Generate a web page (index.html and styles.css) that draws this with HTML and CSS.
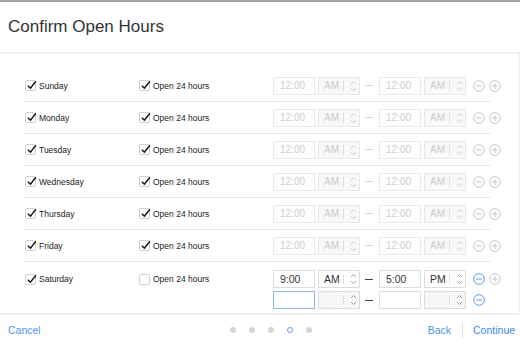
FILE: index.html
```html
<!DOCTYPE html>
<html>
<head>
<title>Confirm Open Hours</title>
<link rel="stylesheet" href="styles.css">
</head>
<body>
<div class="topline"></div>
<header class="header">
<h1>Confirm Open Hours</h1>
</header>

<main class="panel">
<div class="row">
<label class="day"><span class="box"><svg viewBox="0 0 12 12"><path d="M2 6.2 L4.8 9 L10.8 1.4"/></svg></span>Sunday</label>
<label class="allday"><span class="box"><svg viewBox="0 0 12 12"><path d="M2 6.2 L4.8 9 L10.8 1.4"/></svg></span>Open 24 hours</label>
<div class="range off">
<span class="time">12:00</span>
<span class="ampm"><span class="val">AM</span><span class="sep"></span><svg class="chev" viewBox="0 0 7 12"><path d="M1 4 L3.5 1.5 L6 4 M1 8 L3.5 10.5 L6 8"/></svg></span>
<span class="dash"></span>
<span class="time">12:00</span>
<span class="ampm"><span class="val">AM</span><span class="sep"></span><svg class="chev" viewBox="0 0 7 12"><path d="M1 4 L3.5 1.5 L6 4 M1 8 L3.5 10.5 L6 8"/></svg></span>
<svg class="act" viewBox="0 0 12 12"><circle cx="6" cy="6" r="5.3"/><path d="M3 6 H9"/></svg>
<svg class="act" viewBox="0 0 12 12"><circle cx="6" cy="6" r="5.3"/><path d="M3 6 H9 M6 3 V9"/></svg>
</div>
</div>

<div class="row">
<label class="day"><span class="box"><svg viewBox="0 0 12 12"><path d="M2 6.2 L4.8 9 L10.8 1.4"/></svg></span>Monday</label>
<label class="allday"><span class="box"><svg viewBox="0 0 12 12"><path d="M2 6.2 L4.8 9 L10.8 1.4"/></svg></span>Open 24 hours</label>
<div class="range off">
<span class="time">12:00</span>
<span class="ampm"><span class="val">AM</span><span class="sep"></span><svg class="chev" viewBox="0 0 7 12"><path d="M1 4 L3.5 1.5 L6 4 M1 8 L3.5 10.5 L6 8"/></svg></span>
<span class="dash"></span>
<span class="time">12:00</span>
<span class="ampm"><span class="val">AM</span><span class="sep"></span><svg class="chev" viewBox="0 0 7 12"><path d="M1 4 L3.5 1.5 L6 4 M1 8 L3.5 10.5 L6 8"/></svg></span>
<svg class="act" viewBox="0 0 12 12"><circle cx="6" cy="6" r="5.3"/><path d="M3 6 H9"/></svg>
<svg class="act" viewBox="0 0 12 12"><circle cx="6" cy="6" r="5.3"/><path d="M3 6 H9 M6 3 V9"/></svg>
</div>
</div>

<div class="row">
<label class="day"><span class="box"><svg viewBox="0 0 12 12"><path d="M2 6.2 L4.8 9 L10.8 1.4"/></svg></span>Tuesday</label>
<label class="allday"><span class="box"><svg viewBox="0 0 12 12"><path d="M2 6.2 L4.8 9 L10.8 1.4"/></svg></span>Open 24 hours</label>
<div class="range off">
<span class="time">12:00</span>
<span class="ampm"><span class="val">AM</span><span class="sep"></span><svg class="chev" viewBox="0 0 7 12"><path d="M1 4 L3.5 1.5 L6 4 M1 8 L3.5 10.5 L6 8"/></svg></span>
<span class="dash"></span>
<span class="time">12:00</span>
<span class="ampm"><span class="val">AM</span><span class="sep"></span><svg class="chev" viewBox="0 0 7 12"><path d="M1 4 L3.5 1.5 L6 4 M1 8 L3.5 10.5 L6 8"/></svg></span>
<svg class="act" viewBox="0 0 12 12"><circle cx="6" cy="6" r="5.3"/><path d="M3 6 H9"/></svg>
<svg class="act" viewBox="0 0 12 12"><circle cx="6" cy="6" r="5.3"/><path d="M3 6 H9 M6 3 V9"/></svg>
</div>
</div>

<div class="row">
<label class="day"><span class="box"><svg viewBox="0 0 12 12"><path d="M2 6.2 L4.8 9 L10.8 1.4"/></svg></span>Wednesday</label>
<label class="allday"><span class="box"><svg viewBox="0 0 12 12"><path d="M2 6.2 L4.8 9 L10.8 1.4"/></svg></span>Open 24 hours</label>
<div class="range off">
<span class="time">12:00</span>
<span class="ampm"><span class="val">AM</span><span class="sep"></span><svg class="chev" viewBox="0 0 7 12"><path d="M1 4 L3.5 1.5 L6 4 M1 8 L3.5 10.5 L6 8"/></svg></span>
<span class="dash"></span>
<span class="time">12:00</span>
<span class="ampm"><span class="val">AM</span><span class="sep"></span><svg class="chev" viewBox="0 0 7 12"><path d="M1 4 L3.5 1.5 L6 4 M1 8 L3.5 10.5 L6 8"/></svg></span>
<svg class="act" viewBox="0 0 12 12"><circle cx="6" cy="6" r="5.3"/><path d="M3 6 H9"/></svg>
<svg class="act" viewBox="0 0 12 12"><circle cx="6" cy="6" r="5.3"/><path d="M3 6 H9 M6 3 V9"/></svg>
</div>
</div>

<div class="row">
<label class="day"><span class="box"><svg viewBox="0 0 12 12"><path d="M2 6.2 L4.8 9 L10.8 1.4"/></svg></span>Thursday</label>
<label class="allday"><span class="box"><svg viewBox="0 0 12 12"><path d="M2 6.2 L4.8 9 L10.8 1.4"/></svg></span>Open 24 hours</label>
<div class="range off">
<span class="time">12:00</span>
<span class="ampm"><span class="val">AM</span><span class="sep"></span><svg class="chev" viewBox="0 0 7 12"><path d="M1 4 L3.5 1.5 L6 4 M1 8 L3.5 10.5 L6 8"/></svg></span>
<span class="dash"></span>
<span class="time">12:00</span>
<span class="ampm"><span class="val">AM</span><span class="sep"></span><svg class="chev" viewBox="0 0 7 12"><path d="M1 4 L3.5 1.5 L6 4 M1 8 L3.5 10.5 L6 8"/></svg></span>
<svg class="act" viewBox="0 0 12 12"><circle cx="6" cy="6" r="5.3"/><path d="M3 6 H9"/></svg>
<svg class="act" viewBox="0 0 12 12"><circle cx="6" cy="6" r="5.3"/><path d="M3 6 H9 M6 3 V9"/></svg>
</div>
</div>

<div class="row">
<label class="day"><span class="box"><svg viewBox="0 0 12 12"><path d="M2 6.2 L4.8 9 L10.8 1.4"/></svg></span>Friday</label>
<label class="allday"><span class="box"><svg viewBox="0 0 12 12"><path d="M2 6.2 L4.8 9 L10.8 1.4"/></svg></span>Open 24 hours</label>
<div class="range off">
<span class="time">12:00</span>
<span class="ampm"><span class="val">AM</span><span class="sep"></span><svg class="chev" viewBox="0 0 7 12"><path d="M1 4 L3.5 1.5 L6 4 M1 8 L3.5 10.5 L6 8"/></svg></span>
<span class="dash"></span>
<span class="time">12:00</span>
<span class="ampm"><span class="val">AM</span><span class="sep"></span><svg class="chev" viewBox="0 0 7 12"><path d="M1 4 L3.5 1.5 L6 4 M1 8 L3.5 10.5 L6 8"/></svg></span>
<svg class="act" viewBox="0 0 12 12"><circle cx="6" cy="6" r="5.3"/><path d="M3 6 H9"/></svg>
<svg class="act" viewBox="0 0 12 12"><circle cx="6" cy="6" r="5.3"/><path d="M3 6 H9 M6 3 V9"/></svg>
</div>
</div>

<div class="row last">
<label class="day"><span class="box"><svg viewBox="0 0 12 12"><path d="M2 6.2 L4.8 9 L10.8 1.4"/></svg></span>Saturday</label>
<label class="allday"><span class="box"></span>Open 24 hours</label>
<div class="ranges">
<div class="range">
<span class="time">9:00</span>
<span class="ampm"><span class="val">AM</span><span class="sep"></span><svg class="chev" viewBox="0 0 7 12"><path d="M1 4 L3.5 1.5 L6 4 M1 8 L3.5 10.5 L6 8"/></svg></span>
<span class="dash"></span>
<span class="time">5:00</span>
<span class="ampm"><span class="val">PM</span><span class="sep"></span><svg class="chev" viewBox="0 0 7 12"><path d="M1 4 L3.5 1.5 L6 4 M1 8 L3.5 10.5 L6 8"/></svg></span>
<svg class="act blue" viewBox="0 0 12 12"><circle cx="6" cy="6" r="5.3"/><path d="M3 6 H9"/></svg>
<svg class="act" viewBox="0 0 12 12"><circle cx="6" cy="6" r="5.3"/><path d="M3 6 H9 M6 3 V9"/></svg>
</div>
<div class="range">
<span class="time focus"></span>
<span class="ampm empty"><span class="val"></span><span class="sep"></span><svg class="chev" viewBox="0 0 7 12"><path d="M1 4 L3.5 1.5 L6 4 M1 8 L3.5 10.5 L6 8"/></svg></span>
<span class="dash"></span>
<span class="time"></span>
<span class="ampm empty"><span class="val"></span><span class="sep"></span><svg class="chev" viewBox="0 0 7 12"><path d="M1 4 L3.5 1.5 L6 4 M1 8 L3.5 10.5 L6 8"/></svg></span>
<svg class="act blue" viewBox="0 0 12 12"><circle cx="6" cy="6" r="5.3"/><path d="M3 6 H9"/></svg>
</div>
</div>
</div>
</main>

<footer class="footer">
<a class="link">Cancel</a>
<div class="dots">
<span class="dot"></span>
<span class="dot"></span>
<span class="dot"></span>
<span class="dot current"></span>
<span class="dot"></span>
</div>
<a class="link back">Back</a>
<span class="divider"></span>
<a class="link next">Continue</a>
</footer>
</body>
</html>
```

FILE: styles.css
```css
body {
margin: 0;
font-family: "Liberation Sans", Arial, sans-serif;
color: #333;
background: #fff;
}

.topline {
height: 2px;
background-color: #a3a3a3;
}

.header {
height: 50px;
display: flex;
align-items: center;
padding-left: 8px;
border-bottom: 2px solid #efefef;
}

.header h1 {
margin: 0;
font-size: 17px;
font-weight: normal;
color: #333;
}

.panel {
padding-top: 16px;
border-right: 1px solid #ececec;
}

.row {
margin-left: 24px;
width: 466px;
height: 31px;
padding-left: 1px;
box-sizing: content-box;
display: flex;
align-items: center;
border-bottom: 1px solid #e8e8e8;
}

.row > * {
flex-shrink: 0;
}

.row.last {
height: auto;
padding-top: 8px;
padding-bottom: 4px;
align-items: flex-start;
border-bottom: none;
}

.day,
.allday {
display: flex;
align-items: center;
height: 18px;
font-size: 8.5px;
color: #222;
}

.day {
width: 114px;
}

.allday {
width: 134px;
}

.box {
position: relative;
width: 9px;
height: 9px;
border: 1px solid #cfcfcf;
border-radius: 2px;
margin-right: 3px;
background: #fff;
}

.box svg {
position: absolute;
left: 0;
top: -1px;
width: 11px;
height: 11px;
fill: none;
stroke: #111;
stroke-width: 1.5;
}

.ranges {
display: flex;
flex-direction: column;
gap: 3px;
}

.range {
display: flex;
align-items: center;
gap: 3px;
}

.range > * {
flex-shrink: 0;
}

.time,
.ampm {
box-sizing: border-box;
width: 42px;
height: 18px;
border: 1px solid #dcdcdc;
font-size: 10.5px;
color: #333;
display: flex;
align-items: center;
}

.time {
padding-left: 6px;
background: #fff;
}

.time.focus {
border-color: #8db6ee;
}

.ampm {
padding-left: 5px;
background: #fff;
}

.ampm.empty {
background: #f6f6f6;
}

.ampm .val {
width: 19px;
}

.ampm .sep {
width: 1px;
height: 10px;
background: #dedede;
}

.chev {
width: 7px;
height: 12px;
margin-left: 6px;
fill: none;
stroke: #999;
stroke-width: 0.9;
}

.dash {
width: 8px;
height: 1px;
background: #444;
margin: 0 3px 0 2px;
}

.act {
width: 12px;
height: 12px;
fill: none;
stroke: #c6c6c6;
stroke-width: 1;
}

.range .act:first-of-type {
margin-left: 4px;
}

.range .act + .act {
margin-left: 1px;
}

.act.blue {
stroke: #5b9df0;
}

/* disabled rows */
.range.off .time,
.range.off .ampm {
border-color: #e8e8e8;
color: #cdcdcd;
font-size: 10px;
}

.range.off .ampm {
background: #f8f8f8;
}

.range.off .chev {
stroke: #c4c4c4;
}

.range.off .dash {
background: #d0d0d0;
}

.footer {
border-top: 2px solid #efefef;
height: 30px;
display: flex;
align-items: center;
padding-left: 8px;
}

.link {
font-size: 10.5px;
color: #4d95ec;
}

.dots {
display: flex;
gap: 13px;
margin-left: 189px;
}

.dot {
box-sizing: border-box;
width: 6px;
height: 6px;
border-radius: 50%;
background: #d5d5d5;
}

.dot.current {
background: #fff;
border: 1.2px solid #5b9df0;
}

.back {
margin-left: 116px;
}

.divider {
width: 1px;
height: 15px;
background: #e0e0e0;
margin: 0 10px 0 11px;
}

.next {
color: #3a88e6;
}
```
